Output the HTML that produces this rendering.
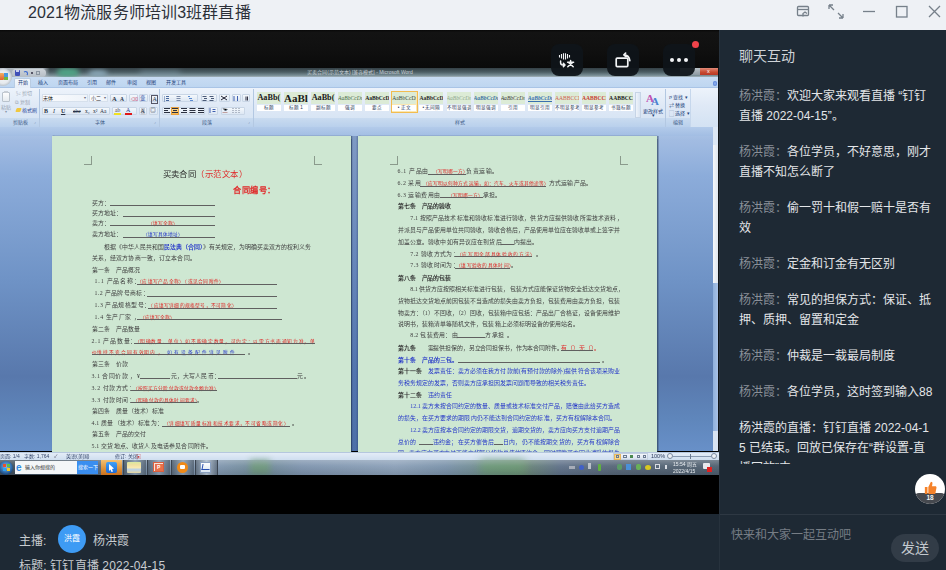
<!DOCTYPE html>
<html lang="zh-CN"><head><meta charset="utf-8">
<style>
*{margin:0;padding:0;box-sizing:border-box}
html,body{width:946px;height:570px;overflow:hidden;background:#1e2934;font-family:"Liberation Sans",sans-serif}
.a{position:absolute}
.glab{font-size:5px;line-height:9px;color:#3e5a86;text-align:center;white-space:nowrap}
.rt{font-size:5px;line-height:8px;color:#1d3f7a;white-space:nowrap}
.bx{height:10px;background:linear-gradient(#f4f8fc,#dde7f3);border:1px solid #c9d6e6;border-radius:1px}
.page{background:#cee7d2;box-shadow:-0.5px 0 1px rgba(30,50,80,.8),0.5px 0 1px rgba(30,50,80,.5)}
.pl{font-size:5.9px;line-height:8px;color:#404040;white-space:nowrap;font-family:"Liberation Serif",serif}
.h{font-size:4.5px;letter-spacing:0.45px}
.btn{width:32px;height:32px;border-radius:8px;background:#141b22}
.msgs{left:20px;top:56px;width:194px;height:378px;overflow:hidden;font-size:12px;line-height:20px;color:#e4e6e9;font-weight:500}
.m{margin-bottom:16px;word-break:break-all;text-spacing-trim:space-all}
.n{color:#8a9099}

</style></head><body>
<div class="a" style="left:0;top:0;width:946px;height:30px;background:#eef1f5"></div>
<div class="a" style="left:28px;top:2.3px;font-size:16px;line-height:22px;color:#2b3038;white-space:nowrap;letter-spacing:0.14px">2021物流服务师培训3班群直播</div>
<svg class="a" style="left:790px;top:0" width="156" height="30" viewBox="0 0 156 30" fill="none" stroke="#76808a" stroke-width="1.3">
  <rect x="7.5" y="6.5" width="11" height="9" rx="1"/><path d="M7.5 9.5h11"/><path d="M13 16.5v-3l2-1.5 2 1.5" />
  <path d="M39 5l5 5M39 5v4M39 5h4M53 18l-5-5M53 18v-4M53 18h-4"/>
  <path d="M73 11.5h12"/>
  <rect x="106.5" y="6.5" width="10.5" height="10.5"/>
  <path d="M139 6l11 11M150 6l-11 11"/>
</svg>
<div class="a" style="left:0;top:30px;width:719px;height:484px;background:#000"></div>
<div class="a" style="left:0;top:30px;width:719px;height:38px;background:linear-gradient(#080808 0,#131313 6%,#101010 50%,#0a0a0a 100%)"></div>

<div class="a" style="left:0;top:68px;width:719px;height:407px;overflow:hidden;filter:blur(0.3px)">
  <!-- word title bar (body y 68-77) -->
  <div class="a" style="left:0;top:0;width:719px;height:9px;background:linear-gradient(#344046,#4c5e64 45%,#7d929a 85%,#a9b6bd)"></div>
  <div class="a" style="left:57px;top:0;width:22px;height:9px;border-radius:40%;background:#4fa486;filter:blur(2.5px)"></div>
  <div class="a" style="left:88px;top:2px;width:20px;height:7px;border-radius:50%;background:#8aa8b8;filter:blur(2.5px)"></div>
  <div class="a" style="left:140px;top:3px;width:40px;height:6px;background:#7f9aa8;filter:blur(3px);opacity:.6"></div>
  <div class="a" style="left:0;top:0;width:50px;height:9px;background:linear-gradient(90deg,#aab3bb 0,#b0b8c0 85%,rgba(170,180,188,0))"></div>
  <div class="a" style="left:12px;top:1px;width:34px;height:8px;border-radius:4px;background:linear-gradient(#cdd3d9,#b6bec6)"></div>
  <div class="a" style="left:15px;top:2px;width:5px;height:6px;background:#4050b8;border-radius:1px"></div>
  <div class="a" style="left:16px;top:2px;width:3px;height:2px;background:#c8d0f0"></div>
  <div class="a" style="left:23px;top:2.5px;width:5px;height:5px;border:1.4px solid #3a6ad0;border-radius:50%;border-bottom-color:transparent;border-left-color:transparent"></div>
  <div class="a" style="left:31px;top:4px;width:1.5px;height:1.5px;background:#556"></div>
  <div class="a" style="left:36px;top:3px;width:4px;height:4px;border:1px solid #8a94a0"></div>
  <div class="a" style="left:245px;top:0;width:230px;height:9px;font-size:5px;line-height:9px;color:#c8d0d6;text-align:center;white-space:nowrap">买卖合同(示范文本) [兼容模式] - Microsoft Word</div>
  <div class="a" style="left:680px;top:0;width:20px;height:7px;background:linear-gradient(#b8c0c6,#8e9aa2)"></div>
  <div class="a" style="left:700px;top:0;width:18px;height:7px;background:linear-gradient(#e08a78,#c84a30 60%,#b83a28)"></div>
  <div class="a" style="left:707px;top:0;font-size:5.5px;line-height:7px;color:#fff">x</div>
  <!-- tabs (body 77-88) -->
  <div class="a" style="left:0;top:9px;width:719px;height:11px;background:linear-gradient(#c8dcf3,#bdd5f0)"></div>
  <div class="a" style="left:0;top:19px;width:719px;height:1px;background:#a9c4e6"></div>
  <div class="a" style="left:14px;top:10px;width:17px;height:10px;background:linear-gradient(#f6f9fd,#e6eef8);border:1px solid #b9cce2;border-bottom:none;border-radius:2px 2px 0 0"></div>
  <div class="a" style="left:0;top:9px;width:719px;height:11px;font-size:5px;line-height:11px;color:#1d3f7a;white-space:nowrap">
    <span class="a" style="left:18px">开始</span><span class="a" style="left:38px">插入</span><span class="a" style="left:58px">页面布局</span><span class="a" style="left:87px">引用</span><span class="a" style="left:106px">邮件</span><span class="a" style="left:127px">审阅</span><span class="a" style="left:146px">视图</span><span class="a" style="left:166px">开发工具</span>
  </div>
  <div class="a" style="left:712.5px;top:13px;width:4.5px;height:4.5px;border-radius:50%;background:radial-gradient(#9ab8f0,#3a6ad0)"></div>
  <!-- office orb -->
  <div class="a" style="left:-6px;top:0px;width:18px;height:18px;border-radius:50%;background:radial-gradient(circle at 50% 50%,#f4f6f8 0,#e6eaee 50%,#b8c0c8 72%,#8a96a2 85%,#cfd6dc 100%)"></div>
  <div class="a" style="left:-1px;top:5px;width:5px;height:7px;background:linear-gradient(#f4b060,#e06030);border-radius:1px"></div>
  <div class="a" style="left:4px;top:5px;width:4px;height:3.5px;background:#4a9ae0"></div>
  <div class="a" style="left:4px;top:8.5px;width:4px;height:3.5px;background:#70b840"></div>
  <!-- ribbon body (body 88-127) -->
  <div class="a" style="left:0;top:20px;width:719px;height:39px;background:linear-gradient(#edf3fb,#dfe9f6 45%,#d3e2f3)"></div>
  <div class="a" style="left:0;top:50px;width:690px;height:9px;background:linear-gradient(#c9dbf0,#b9d0ec)"></div>
  <div class="a" style="left:0;top:59px;width:719px;height:9px;background:linear-gradient(#b3cae8,#a0bce3)"></div>
  <div class="a" style="left:39px;top:21px;width:1px;height:38px;background:#b3c8e2"></div>
  <div class="a" style="left:159px;top:21px;width:1px;height:38px;background:#b3c8e2"></div>
  <div class="a" style="left:253px;top:21px;width:1px;height:38px;background:#b3c8e2"></div>
  <div class="a" style="left:665px;top:21px;width:1px;height:38px;background:#b3c8e2"></div>
  <div class="a" style="left:690px;top:21px;width:1px;height:38px;background:#c6d7ec"></div>
  <div class="a glab" style="left:0;top:50px;width:40px">剪贴板</div>
  <div class="a glab" style="left:40px;top:50px;width:119px">字体</div>
  <div class="a glab" style="left:160px;top:50px;width:93px">段落</div>
  <div class="a glab" style="left:254px;top:50px;width:411px">样式</div>
  <div class="a glab" style="left:666px;top:50px;width:24px">编辑</div>
  <!-- clipboard -->
  <div class="a" style="left:2px;top:23.5px;width:8px;height:10px;background:linear-gradient(#fdfdfe,#e6ebf0);border:0.8px solid #b9c2cc;border-radius:1px"></div>
  <div class="a" style="left:4px;top:22.5px;width:4px;height:2px;background:#c8ced6"></div>
  <div class="a rt" style="left:1px;top:35.5px;line-height:7px;color:#98a4b2">粘贴</div>
  <div class="a rt" style="left:4.5px;top:41px;line-height:6px;font-size:4px;color:#8896a8">▾</div>
  <div class="a rt" style="left:16px;top:22px;line-height:7px;color:#98a4b2">✂ 剪切</div>
  <div class="a rt" style="left:15px;top:30.5px;line-height:7px;color:#98a4b2">⧉ 复制</div>
  <div class="a" style="left:16px;top:40px;width:5px;height:4px;background:#f0c840;border-radius:1px;transform:skewX(-20deg)"></div>
  <div class="a rt" style="left:22px;top:38.5px;line-height:7px;color:#2a4a9a">格式刷</div>
  <div class="a rt" style="left:34px;top:51px;line-height:6px;font-size:4px;color:#7088a8">⌟</div>
  <!-- font group -->
  <div class="a" style="left:42px;top:25.700000000000003px;width:46px;height:8.4px;background:linear-gradient(90deg,#fbfcfe,#eef3f9);border:0.6px solid #d6e0ec"></div>
  <div class="a rt" style="left:43px;top:25.700000000000003px;line-height:8.4px;color:#222">宋体</div>
  <div class="a rt" style="left:84px;top:25.700000000000003px;line-height:8.4px;font-size:4px;color:#667">▾</div>
  <div class="a" style="left:89px;top:25.700000000000003px;width:19px;height:8.4px;background:linear-gradient(90deg,#fbfcfe,#eef3f9);border:0.6px solid #d6e0ec"></div>
  <div class="a rt" style="left:90.5px;top:25.700000000000003px;line-height:8.4px;color:#333">小二</div>
  <div class="a rt" style="left:104px;top:25.700000000000003px;line-height:8.4px;font-size:4px;color:#667">▾</div>
  <div class="a bx" style="left:110px;top:25.700000000000003px;width:17px;height:8.4px"></div>
  <div class="a bx" style="left:129px;top:25.700000000000003px;width:8.5px;height:8.4px"></div>
  <div class="a bx" style="left:138.5px;top:25.700000000000003px;width:9px;height:8.4px"></div>
  <div class="a bx" style="left:149px;top:25.700000000000003px;width:8.5px;height:8.4px"></div>
  <div class="a bx" style="left:42px;top:38.599999999999994px;width:67.5px;height:8.4px"></div>
  <div class="a bx" style="left:112px;top:38.599999999999994px;width:24.7px;height:8.4px"></div>
  <div class="a bx" style="left:139px;top:38.599999999999994px;width:8px;height:8.4px"></div>
  <div class="a bx" style="left:149px;top:38.599999999999994px;width:8.5px;height:8.4px"></div>
  <div class="a" style="left:0;top:0;width:260px;height:60px;font-family:'Liberation Serif',serif;color:#2a3448;white-space:nowrap">
    <span class="a" style="left:112px;top:26.5px;font-size:6.5px;line-height:7px;font-weight:bold">A</span><span class="a" style="left:120px;top:27.5px;font-size:5.5px;line-height:7px;font-weight:bold">A</span>
    <span class="a" style="left:151px;top:26.5px;font-size:6px;line-height:7px;border:0.6px solid #556;padding:0 .5px">A</span>
    <span class="a" style="left:140px;top:26.5px;font-size:5.5px;line-height:7px;color:#1d3f9a;font-family:'Liberation Sans',sans-serif">变</span>
    <span class="a" style="left:44px;top:39.5px;font-size:6px;line-height:7px;font-weight:bold">B</span>
    <span class="a" style="left:53px;top:39.5px;font-size:6px;line-height:7px;font-style:italic">I</span>
    <span class="a" style="left:61px;top:39.5px;font-size:6px;line-height:7px;font-weight:bold;text-decoration:underline">U</span>
    <span class="a" style="left:73px;top:39.5px;font-size:5.5px;line-height:7px;text-decoration:line-through">abe</span>
    <span class="a" style="left:85px;top:39.5px;font-size:5.5px;line-height:7px">x₂</span>
    <span class="a" style="left:93px;top:39.5px;font-size:5.5px;line-height:7px">x²</span>
    <span class="a" style="left:100px;top:39.5px;font-size:5.5px;line-height:7px">Aa</span>
    <span class="a" style="left:115px;top:39px;font-size:5.5px;line-height:7px;color:#445">ab</span>
    <span class="a" style="left:126px;top:39px;font-size:6px;line-height:7px;color:#2a3a8a">A</span>
    <span class="a" style="left:140.5px;top:39.5px;font-size:6px;line-height:7px;background:#c8ccd4">A</span>
    <span class="a" style="left:150px;top:39px;font-size:6px;line-height:7px">◎</span>
    <span class="a" style="left:131px;top:28px;font-size:5px;line-height:7px;color:#d06080">⌫</span>
  </div>
  <div class="a" style="left:114px;top:45px;width:7px;height:1.6px;background:#f0e020"></div>
  <div class="a" style="left:125px;top:45px;width:7px;height:1.6px;background:#e01818"></div>
  <!-- paragraph group -->
  <div class="a bx" style="left:162.2px;top:26.299999999999997px;width:36px;height:8px"></div>
  <div class="a bx" style="left:200.5px;top:26.299999999999997px;width:16.2px;height:8px"></div>
  <div class="a bx" style="left:219px;top:26.299999999999997px;width:11px;height:8px"></div>
  <div class="a bx" style="left:231.6px;top:26.299999999999997px;width:9px;height:8px"></div>
  <div class="a bx" style="left:242.2px;top:26.299999999999997px;width:8.3px;height:8px"></div>
  <div class="a bx" style="left:162.2px;top:38.5px;width:43.3px;height:8px"></div>
  <div class="a" style="left:170.5px;top:38.5px;width:8.4px;height:8px;background:linear-gradient(#fde0a0,#f8b850);border:0.6px solid #e8a040"></div>
  <div class="a bx" style="left:207.8px;top:38.5px;width:10.5px;height:8px"></div>
  <div class="a bx" style="left:220.5px;top:38.5px;width:24.5px;height:8px"></div>
  <svg class="a" style="left:0;top:0" width="260" height="60" viewBox="0 68 260 60">
    <g stroke="#3a4458" stroke-width="1">
      <path d="M164.5 96.5v1M166 96.5h3M164.5 98.5v1M166 98.5h3M164.5 100.5v1M166 100.5h3" stroke="#4a6aa0"/>
      <path d="M176.5 96.5h4M176.5 98.5h4M176.5 100.5h4" stroke="#7a8aa8"/>
      <path d="M188 96.5h2M189 98.5h3M190 100.5h3" stroke="#5a8ad0"/>
      <path d="M202.5 96.5h4M204 98.5h3M202.5 100.5h4M209.5 96.5h4M211 98.5h3M209.5 100.5h4" stroke="#4a5a78"/>
      <path d="M221 96l6 4M227 96l-6 4" stroke="#223"/>
      <path d="M234 96v5M237.5 96v5" stroke="#4060b0"/>
      <path d="M246 96.5v4M247.5 96.5v4" stroke="#334"/>
      <path d="M164 108.5h6M164 110.5h4M164 112.5h6" stroke="#2a3040"/>
      <path d="M172 108.5h6M173 110.5h4M172 112.5h6" stroke="#2a3040"/>
      <path d="M181 108.5h6M183 110.5h4M181 112.5h6" stroke="#2a3040"/>
      <path d="M189.5 108.5h6M189.5 110.5h6M189.5 112.5h6" stroke="#2a3040"/>
      <path d="M198 108.5h6M198 110.5h6M198 112.5h6" stroke="#2a3040"/>
      <path d="M210 108v5M212.5 109.5h3M212.5 111.5h3" stroke="#4060b0"/>
      <path d="M222.5 112.5h5" stroke="#c0a0a0"/><path d="M223 108.5l2.5 2.5 2-2" stroke="#6a7a90"/>
      <path d="M232.5 108.5h1M235.5 108.5h1M238.5 108.5h1M232.5 110.5h1M235.5 110.5h1M238.5 110.5h1M232.5 112.5h1M235.5 112.5h1M238.5 112.5h1" stroke="#7a8598"/>
    </g>
  </svg>
  <div class="a rt" style="left:248px;top:51px;line-height:6px;font-size:4px;color:#7088a8">⌟</div>
  <div class="a rt" style="left:154px;top:51px;line-height:6px;font-size:4px;color:#7088a8">⌟</div>
  <!-- gallery scroll -->
  <div class="a" style="left:635px;top:24px;width:6px;height:26px;background:linear-gradient(90deg,#eef3fa,#d9e4f2);border:1px solid #c6d4e6"></div>
  <div class="a" style="left:646px;top:24px;font-family:'Liberation Serif',serif;font-size:11px;line-height:12px;color:#c050b0;font-weight:bold">A</div>
  <div class="a" style="left:651px;top:27px;font-family:'Liberation Serif',serif;font-size:11px;line-height:12px;color:#4a80d0;font-weight:bold">A</div>
  <div class="a rt" style="left:643px;top:40px;line-height:6px;color:#1d3f7a">更改样式</div>
  <div class="a rt" style="left:652px;top:45px;line-height:4px;color:#1d3f7a">▾</div>
  <div class="a rt" style="left:669px;top:25px;line-height:8px;color:#1d3f7a;white-space:nowrap">ሾ 查找 ▾<br>⇄ 替换<br>⬚ 选择 ▾</div>

<div class="a" style="left:256.8px;top:24.3px;width:24px;height:12.2px;background:#dcebd6;overflow:hidden;font-family:'Liberation Serif',serif;font-size:8.2px;line-height:12.2px;color:#1a1a1a;font-weight:bold;white-space:nowrap;text-align:center">AaBb(</div>
<div class="a" style="left:256.8px;top:36.5px;width:24px;height:6.3px;background:#fff;font-size:4.6px;line-height:6.3px;text-align:center;color:#2a3a5a;white-space:nowrap;overflow:hidden">标题</div>
<div class="a" style="left:283.9px;top:24.3px;width:24px;height:12.2px;background:#dcebd6;overflow:hidden;font-family:'Liberation Serif',serif;font-size:11px;line-height:12.2px;color:#1a1a1a;font-weight:bold;white-space:nowrap;text-align:center">AaBl</div>
<div class="a" style="left:283.9px;top:36.5px;width:24px;height:6.3px;background:#fff;font-size:4.6px;line-height:6.3px;text-align:center;color:#2a3a5a;white-space:nowrap;overflow:hidden">标题 1</div>
<div class="a" style="left:311.0px;top:24.3px;width:24px;height:12.2px;background:#dcebd6;overflow:hidden;font-family:'Liberation Serif',serif;font-size:8.2px;line-height:12.2px;color:#1a1a1a;font-weight:bold;white-space:nowrap;text-align:center">AaBb(</div>
<div class="a" style="left:311.0px;top:36.5px;width:24px;height:6.3px;background:#fff;font-size:4.6px;line-height:6.3px;text-align:center;color:#2a3a5a;white-space:nowrap;overflow:hidden">副标题</div>
<div class="a" style="left:338.1px;top:24.3px;width:24px;height:12.2px;background:#dcebd6;overflow:hidden;font-family:'Liberation Serif',serif;font-size:5.6px;line-height:12.2px;color:#4a6a4a;font-weight:normal;font-style:italic;white-space:nowrap;text-align:center">AaBbCcDı</div>
<div class="a" style="left:338.1px;top:36.5px;width:24px;height:6.3px;background:#fff;font-size:4.6px;line-height:6.3px;text-align:center;color:#2a3a5a;white-space:nowrap;overflow:hidden">强调</div>
<div class="a" style="left:365.2px;top:24.3px;width:24px;height:12.2px;background:#dcebd6;overflow:hidden;font-family:'Liberation Serif',serif;font-size:5.6px;line-height:12.2px;color:#1a1a1a;font-weight:bold;white-space:nowrap;text-align:center">AaBbCcD</div>
<div class="a" style="left:365.2px;top:36.5px;width:24px;height:6.3px;background:#fff;font-size:4.6px;line-height:6.3px;text-align:center;color:#2a3a5a;white-space:nowrap;overflow:hidden">要点</div>
<div class="a" style="left:390.8px;top:23px;width:27px;height:22px;border:1px solid #f2bc50;background:#fbe7b0"></div>
<div class="a" style="left:392.3px;top:24.3px;width:24px;height:12.2px;background:#dcebd6;overflow:hidden;font-family:'Liberation Serif',serif;font-size:5.6px;line-height:12.2px;color:#3a4a3a;font-weight:normal;white-space:nowrap;text-align:center">AaBbCcDı</div>
<div class="a" style="left:392.3px;top:36.5px;width:24px;height:6.3px;background:#fff;font-size:4.6px;line-height:6.3px;text-align:center;color:#2a3a5a;white-space:nowrap;overflow:hidden">• 正文</div>
<div class="a" style="left:419.4px;top:24.3px;width:24px;height:12.2px;background:#dcebd6;overflow:hidden;font-family:'Liberation Serif',serif;font-size:5.6px;line-height:12.2px;color:#2a2a2a;font-weight:bold;white-space:nowrap;text-align:center">AaBbCcDı</div>
<div class="a" style="left:419.4px;top:36.5px;width:24px;height:6.3px;background:#fff;font-size:4.6px;line-height:6.3px;text-align:center;color:#2a3a5a;white-space:nowrap;overflow:hidden">• 无间隔</div>
<div class="a" style="left:446.5px;top:24.3px;width:24px;height:12.2px;background:#dcebd6;overflow:hidden;font-family:'Liberation Serif',serif;font-size:5.6px;line-height:12.2px;color:#90a890;font-weight:normal;font-style:italic;white-space:nowrap;text-align:center">AaBbCcDı</div>
<div class="a" style="left:446.5px;top:36.5px;width:24px;height:6.3px;background:#fff;font-size:4.6px;line-height:6.3px;text-align:center;color:#2a3a5a;white-space:nowrap;overflow:hidden">不明显强调</div>
<div class="a" style="left:473.6px;top:24.3px;width:24px;height:12.2px;background:#dcebd6;overflow:hidden;font-family:'Liberation Serif',serif;font-size:5.6px;line-height:12.2px;color:#3a70a0;font-weight:bold;font-style:italic;white-space:nowrap;text-align:center">AaBbCcDı</div>
<div class="a" style="left:473.6px;top:36.5px;width:24px;height:6.3px;background:#fff;font-size:4.6px;line-height:6.3px;text-align:center;color:#2a3a5a;white-space:nowrap;overflow:hidden">明显强调</div>
<div class="a" style="left:500.7px;top:24.3px;width:24px;height:12.2px;background:#dcebd6;overflow:hidden;font-family:'Liberation Serif',serif;font-size:5.6px;line-height:12.2px;color:#3a3a3a;font-weight:normal;font-style:italic;white-space:nowrap;text-align:center">AaBbCcDı</div>
<div class="a" style="left:500.7px;top:36.5px;width:24px;height:6.3px;background:#fff;font-size:4.6px;line-height:6.3px;text-align:center;color:#2a3a5a;white-space:nowrap;overflow:hidden">引用</div>
<div class="a" style="left:527.8px;top:24.3px;width:24px;height:12.2px;background:#dcebd6;overflow:hidden;font-family:'Liberation Serif',serif;font-size:5.6px;line-height:12.2px;color:#3a70b0;font-weight:bold;font-style:italic;text-decoration:underline;white-space:nowrap;text-align:center">AaBbCcDı</div>
<div class="a" style="left:527.8px;top:36.5px;width:24px;height:6.3px;background:#fff;font-size:4.6px;line-height:6.3px;text-align:center;color:#2a3a5a;white-space:nowrap;overflow:hidden">明显引用</div>
<div class="a" style="left:554.9px;top:24.3px;width:24px;height:12.2px;background:#dcebd6;overflow:hidden;font-family:'Liberation Serif',serif;font-size:5.6px;line-height:12.2px;color:#d06050;font-weight:normal;white-space:nowrap;text-align:center">AABBCCD</div>
<div class="a" style="left:554.9px;top:36.5px;width:24px;height:6.3px;background:#fff;font-size:4.6px;line-height:6.3px;text-align:center;color:#2a3a5a;white-space:nowrap;overflow:hidden">不明显参考</div>
<div class="a" style="left:582.0px;top:24.3px;width:24px;height:12.2px;background:#dcebd6;overflow:hidden;font-family:'Liberation Serif',serif;font-size:5.6px;line-height:12.2px;color:#c84030;font-weight:bold;white-space:nowrap;text-align:center">AABBCCI</div>
<div class="a" style="left:582.0px;top:36.5px;width:24px;height:6.3px;background:#fff;font-size:4.6px;line-height:6.3px;text-align:center;color:#2a3a5a;white-space:nowrap;overflow:hidden">明显参考</div>
<div class="a" style="left:609.1px;top:24.3px;width:24px;height:12.2px;background:#dcebd6;overflow:hidden;font-family:'Liberation Serif',serif;font-size:5.6px;line-height:12.2px;color:#1a1a1a;font-weight:bold;white-space:nowrap;text-align:center">AABBCCI</div>
<div class="a" style="left:609.1px;top:36.5px;width:24px;height:6.3px;background:#fff;font-size:4.6px;line-height:6.3px;text-align:center;color:#2a3a5a;white-space:nowrap;overflow:hidden">书籍标题</div>

  <!-- doc background (body 127-451) -->
  <div class="a" style="left:0;top:59px;width:713px;height:324px;background:linear-gradient(#b0c8e8 0,#a2bce2 4%,#8cacda 15%,#6f93c6 47%,#5878ac 77%,#5f86bb 90%,#6890c8 100%)"></div>
  <div class="a" style="left:0;top:59px;width:713px;height:9px;background:linear-gradient(#b3cbea,#a2bde3)"></div>
  <div class="a" style="left:713px;top:59px;width:5px;height:324px;background:linear-gradient(90deg,#8fb0dc,#a9c2e6)"></div>
  <div class="a" style="left:713px;top:59px;width:5px;height:18px;background:#dde8f5"></div>
  <div class="a" style="left:713px;top:77px;width:5px;height:138px;background:linear-gradient(90deg,#f6f8fb,#dfe6ee)"></div>
  <div class="a" style="left:713px;top:363px;width:5px;height:20px;background:#d8e4f3"></div>
  <div class="a" style="left:718px;top:0;width:1px;height:407px;background:#101418"></div>
  <div class="a" style="left:351px;top:68px;width:7px;height:315px;background:linear-gradient(90deg,rgba(30,50,90,.35),rgba(30,50,90,0) 30%,rgba(30,50,90,0) 70%,rgba(30,50,90,.3)),linear-gradient(#7f9ac4,#6686ba 40%,#5275ae 75%,#4d70a8)"></div>
  <div class="a page" style="left:52px;top:68px;width:299px;height:320px"></div>
  <div class="a page" style="left:358px;top:68px;width:299px;height:320px"></div>
  <div class="a" style="left:657px;top:68px;width:2px;height:315px;background:rgba(60,80,110,.35)"></div>
  <div class="a" style="left:91px;top:88px;width:0.8px;height:8px;background:#8a9a8c"></div>
  <div class="a" style="left:84px;top:96px;width:8px;height:0.8px;background:#8a9a8c"></div>
  <div class="a" style="left:314px;top:88px;width:0.8px;height:8px;background:#8a9a8c"></div>
  <div class="a" style="left:314px;top:96px;width:8px;height:0.8px;background:#8a9a8c"></div>
  <div class="a" style="left:397px;top:88px;width:0.8px;height:8px;background:#8a9a8c"></div>
  <div class="a" style="left:390px;top:96px;width:8px;height:0.8px;background:#8a9a8c"></div>
  <div class="a" style="left:620px;top:88px;width:0.8px;height:8px;background:#8a9a8c"></div>
  <div class="a" style="left:620px;top:96px;width:8px;height:0.8px;background:#8a9a8c"></div>
  <div class="a" style="left:0;top:0;width:719px;height:383px;filter:blur(0.2px)">
  <div class="a" style="left:162.5px;top:101px;font-size:8.4px;line-height:11px;color:#2a2a2a;white-space:nowrap;letter-spacing:0.45px">买卖合同<span style="color:#e02828">（示范文本）</span></div>
  <div class="a" style="left:233px;top:116.5px;font-size:8.2px;line-height:11px;color:#e02828;font-weight:bold;white-space:nowrap;letter-spacing:0.5px">合同编号：</div>
<div class="a pl" style="left:91.6px;top:131.0px"><span style="color:#404040">买方：</span></div>
<div class="a" style="left:110.4px;top:137.2px;width:104.6px;height:0.5px;background:#606060"></div>
<div class="a pl" style="left:91.6px;top:141.3px"><span style="color:#404040">买方地址：</span></div>
<div class="a" style="left:122.5px;top:147.5px;width:92.5px;height:0.5px;background:#606060"></div>
<div class="a pl" style="left:91.6px;top:150.9px"><span style="color:#404040">卖方：</span></div>
<div class="a pl" style="left:148.4px;top:150.9px"><span style="color:#e02020;font-size:4.7px">（填写全称）</span></div>
<div class="a" style="left:110.4px;top:157.1px;width:104.6px;height:0.5px;background:#606060"></div>
<div class="a pl" style="left:91.6px;top:162.3px"><span style="color:#404040">卖方地址：</span></div>
<div class="a pl" style="left:142.8px;top:162.3px"><span style="color:#2030c8;font-size:4.7px">（填写具体地址）</span></div>
<div class="a" style="left:122.5px;top:168.5px;width:92.5px;height:0.5px;background:#606060"></div>
<div class="a pl" style="left:104.3px;top:174.5px"><span style="color:#404040">根据《中华人民共和国</span><span style="color:#2436c8;font-weight:bold">民法典（合同）</span><span style="color:#404040">》有关规定，为明确买卖双方的权利义务</span></div>
<div class="a pl" style="left:91.6px;top:185.6px"><span style="color:#404040;letter-spacing:0.13px">关系，经双方协商一致，订立本合同。</span></div>
<div class="a pl" style="left:91.6px;top:197.8px"><span style="color:#404040">第一条　产品概况</span></div>
<div class="a pl" style="left:94.6px;top:209.3px"><span style="color:#404040;letter-spacing:0.81px">1.1 产品名称：</span></div>
<div class="a pl" style="left:137.0px;top:209.3px"><span style="color:#e02020;font-size:4.7px;letter-spacing:0.26px">（应填写产品全称）（或见合同附件）</span></div>
<div class="a" style="left:137.0px;top:215.5px;width:140.3px;height:0.5px;background:#606060"></div>
<div class="a pl" style="left:94.6px;top:221.3px"><span style="color:#404040;letter-spacing:0.34px">1.2 产品牌号商标：</span></div>
<div class="a" style="left:147.2px;top:227.5px;width:129.8px;height:0.5px;background:#606060"></div>
<div class="a pl" style="left:94.6px;top:233.3px"><span style="color:#404040;letter-spacing:0.48px">1.3 产品规格型号：</span></div>
<div class="a pl" style="left:148.4px;top:233.3px"><span style="color:#e02020;font-size:4.7px;letter-spacing:0.21px">（应填写详细的规格型号，不可简化）</span></div>
<div class="a" style="left:148.0px;top:239.5px;width:129.0px;height:0.5px;background:#606060"></div>
<div class="a pl" style="left:94.6px;top:245.0px"><span style="color:#404040;letter-spacing:0.56px">1.4 生产厂家 ，</span></div>
<div class="a pl" style="left:139.5px;top:245.0px"><span style="color:#e02020;font-size:4.7px;letter-spacing:0.03px">（应填写全称）</span></div>
<div class="a" style="left:137.0px;top:251.2px;width:144.6px;height:0.5px;background:#606060"></div>
<div class="a pl" style="left:91.6px;top:256.9px"><span style="color:#404040">第二条　产品数量</span></div>
<div class="a pl" style="left:91.6px;top:268.8px"><span style="color:#404040;letter-spacing:0.73px">2.1 产品数量：</span></div>
<div class="a pl" style="left:134.5px;top:268.8px"><span style="color:#e02020;font-size:4.7px;letter-spacing:0.66px">（明确数量、单位）如不能确定数量，可约定：以需方书面通知为准，单</span></div>
<div class="a" style="left:134.0px;top:275.0px;width:180.6px;height:0.5px;background:#606060"></div>
<div class="a pl" style="left:91.6px;top:280.2px"><span style="color:#e02020;font-size:4.7px;letter-spacing:0.87px">价维持不变合同有效期内 ，</span></div>
<div class="a pl" style="left:167.4px;top:280.2px"><span style="color:#2030c8;font-size:4.7px;letter-spacing:2.00px">如有设备配件详见附件</span></div>
<div class="a pl" style="left:248.0px;top:280.2px"><span style="color:#404040">。</span></div>
<div class="a" style="left:92.0px;top:286.4px;width:153.0px;height:0.5px;background:#606060"></div>
<div class="a pl" style="left:91.6px;top:291.6px"><span style="color:#404040">第三条　价款</span></div>
<div class="a pl" style="left:91.6px;top:303.8px"><span style="color:#404040;letter-spacing:0.51px">3.1 合同价款 ，¥</span></div>
<div class="a pl" style="left:170.7px;top:303.8px"><span style="color:#404040;letter-spacing:0.16px">元，大写人民币：</span></div>
<div class="a pl" style="left:296.8px;top:303.8px"><span style="color:#404040">元 。</span></div>
<div class="a" style="left:139.5px;top:310.0px;width:30.5px;height:0.5px;background:#606060"></div>
<div class="a" style="left:218.0px;top:310.0px;width:78.8px;height:0.5px;background:#606060"></div>
<div class="a pl" style="left:91.6px;top:315.8px"><span style="color:#404040;letter-spacing:0.56px">3.2 付款方式：</span></div>
<div class="a pl" style="left:133.2px;top:315.8px"><span style="color:#e02020;font-size:4.7px;letter-spacing:0.05px">（按照买方分阶付款或付款金额为准）</span></div>
<div class="a" style="left:131.0px;top:322.0px;width:86.4px;height:0.5px;background:#606060"></div>
<div class="a pl" style="left:91.6px;top:327.7px"><span style="color:#404040;letter-spacing:0.56px">3.3 付款时间：</span></div>
<div class="a pl" style="left:133.0px;top:327.7px"><span style="color:#e02020;font-size:4.7px;letter-spacing:0.17px">（明确付款的具体时间要求）</span></div>
<div class="a pl" style="left:197.0px;top:327.7px"><span style="color:#404040">。</span></div>
<div class="a" style="left:131.0px;top:333.9px;width:66.0px;height:0.5px;background:#606060"></div>
<div class="a pl" style="left:91.6px;top:338.6px"><span style="color:#404040;letter-spacing:0.04px">第四条　质量（技术）标准</span></div>
<div class="a pl" style="left:91.6px;top:351.3px"><span style="color:#404040;letter-spacing:0.18px">4.1 质量（技术）标准为：</span></div>
<div class="a pl" style="left:163.6px;top:351.3px"><span style="color:#e02020;font-size:4.7px;letter-spacing:0.46px">（详细填写质量标准和技术要求，不可省略或简化）</span></div>
<div class="a pl" style="left:291.7px;top:351.3px"><span style="color:#404040">。</span></div>
<div class="a" style="left:162.4px;top:357.5px;width:128.1px;height:0.5px;background:#606060"></div>
<div class="a pl" style="left:91.6px;top:362.2px"><span style="color:#404040">第五条　产品的交付</span></div>
<div class="a pl" style="left:91.6px;top:374.1px"><span style="color:#404040;letter-spacing:0.18px">5.1 交货地点、收货人及电话参见合同附件。</span></div>
<div class="a pl" style="left:397.6px;top:99.4px"><span style="color:#404040;letter-spacing:0.67px">6.1 产品由</span></div>
<div class="a pl" style="left:433.0px;top:99.4px"><span style="color:#e02020;font-size:4.7px;letter-spacing:0.03px">（写明哪一方）</span></div>
<div class="a pl" style="left:466.0px;top:99.4px"><span style="color:#404040;letter-spacing:0.56px">负责运输。</span></div>
<div class="a" style="left:428.0px;top:105.6px;width:38.0px;height:0.5px;background:#606060"></div>
<div class="a pl" style="left:397.6px;top:111.3px"><span style="color:#404040;letter-spacing:0.49px">6.2 采用</span></div>
<div class="a pl" style="left:423.0px;top:111.3px"><span style="color:#e02020;font-size:4.7px;letter-spacing:0.06px">（应写明以何种方式运输，如：汽车、火车或其他途等）</span></div>
<div class="a pl" style="left:548.5px;top:111.3px"><span style="color:#404040;letter-spacing:0.29px">方式运输产品。</span></div>
<div class="a" style="left:420.4px;top:117.5px;width:125.6px;height:0.5px;background:#606060"></div>
<div class="a pl" style="left:397.6px;top:122.8px"><span style="color:#404040;letter-spacing:0.44px">6.3 运输费用由</span></div>
<div class="a pl" style="left:448.0px;top:122.8px"><span style="color:#e02020;font-size:4.7px;letter-spacing:0.06px">（写明哪一方）</span></div>
<div class="a pl" style="left:482.6px;top:122.8px"><span style="color:#404040">承担。</span></div>
<div class="a" style="left:439.5px;top:129.0px;width:43.1px;height:0.5px;background:#606060"></div>
<div class="a pl" style="left:397.6px;top:134.4px"><span style="color:#333;font-weight:bold;letter-spacing:-0.02px">第七条　产品的验收</span></div>
<div class="a pl" style="left:410.3px;top:146.3px"><span style="color:#404040;letter-spacing:0.15px">7.1 按照产品技术标准和验收标准进行验收，供货方应提供验收所需技术资料，</span></div>
<div class="a pl" style="left:397.6px;top:157.8px"><span style="color:#404040;letter-spacing:0.01px">并派员与产品使用单位共同验收，验收合格后，产品使用单位应在验收单或上签字并</span></div>
<div class="a pl" style="left:397.6px;top:169.7px"><span style="color:#404040;letter-spacing:0.12px">加盖公章。验收中如有异议应在到货后</span></div>
<div class="a pl" style="left:514.3px;top:169.7px"><span style="color:#404040">内提出。</span></div>
<div class="a" style="left:501.0px;top:175.9px;width:13.3px;height:0.5px;background:#606060"></div>
<div class="a pl" style="left:410.3px;top:181.9px"><span style="color:#404040;letter-spacing:0.42px">7.2 验收方式为：</span></div>
<div class="a pl" style="left:456.5px;top:181.9px"><span style="color:#e02020;font-size:4.7px;letter-spacing:0.68px">（应写明全部具体验收的方法）</span></div>
<div class="a pl" style="left:536.0px;top:181.9px"><span style="color:#404040">。</span></div>
<div class="a" style="left:454.7px;top:188.1px;width:77.3px;height:0.5px;background:#606060"></div>
<div class="a pl" style="left:410.3px;top:193.3px"><span style="color:#404040;letter-spacing:0.42px">7.3 验收时间为：</span></div>
<div class="a pl" style="left:456.0px;top:193.3px"><span style="color:#e02020;font-size:4.7px;letter-spacing:0.29px">（填写验收的具体时间）</span></div>
<div class="a pl" style="left:510.5px;top:193.3px"><span style="color:#404040">。</span></div>
<div class="a" style="left:454.7px;top:199.5px;width:55.8px;height:0.5px;background:#606060"></div>
<div class="a pl" style="left:397.6px;top:205.5px"><span style="color:#333;font-weight:bold;letter-spacing:-0.02px">第八条　产品的包装</span></div>
<div class="a pl" style="left:410.3px;top:217.4px"><span style="color:#404040;letter-spacing:0.02px">8.1 供货方应按照相关标准进行包装，包装方式应能保证货物安全抵达交货地点，</span></div>
<div class="a pl" style="left:397.6px;top:229.3px"><span style="color:#404040;letter-spacing:0.01px">货物抵达交货地点前因包装不当造成的损失由卖方负担，包装费用由卖方负担，包装</span></div>
<div class="a pl" style="left:397.6px;top:241.0px"><span style="color:#404040;letter-spacing:0.02px">物卖方：（1）不回收，（2）回收，包装箱中应包括：产品出厂合格证，设备使用维护</span></div>
<div class="a pl" style="left:397.6px;top:251.6px"><span style="color:#404040;letter-spacing:0.06px">说明书，装箱清单等随机文件，包装箱上必须标明设备的使用站名。</span></div>
<div class="a pl" style="left:410.3px;top:263.0px"><span style="color:#404040;letter-spacing:0.28px">8.2 包装费用：由</span></div>
<div class="a pl" style="left:485.1px;top:263.0px"><span style="color:#404040;letter-spacing:0.67px">方承担 。</span></div>
<div class="a" style="left:457.2px;top:269.2px;width:27.9px;height:0.5px;background:#606060"></div>
<div class="a pl" style="left:397.6px;top:275.8px"><span style="color:#333;font-weight:bold">第九条</span></div>
<div class="a pl" style="left:427.5px;top:275.8px"><span style="color:#404040;letter-spacing:-0.12px">需提供担保的，另立合同担保书，作为本合同附件。</span></div>
<div class="a pl" style="left:561.0px;top:275.8px"><span style="color:#e02828;letter-spacing:-0.04px">有（）无（）。</span></div>
<div class="a" style="left:561.0px;top:282.0px;width:32.0px;height:0.5px;background:#606060"></div>
<div class="a pl" style="left:397.6px;top:287.7px"><span style="color:#2436c8;font-weight:bold;letter-spacing:0.01px">第十条　产品的三包。</span></div>
<div class="a pl" style="left:602.0px;top:287.7px"><span style="color:#404040">。</span></div>
<div class="a" style="left:458.0px;top:293.9px;width:142.0px;height:0.5px;background:#606060"></div>
<div class="a pl" style="left:397.6px;top:299.1px"><span style="color:#333;font-weight:bold">第十一条</span></div>
<div class="a pl" style="left:427.5px;top:299.1px"><span style="color:#2436c8;letter-spacing:0.08px">发票责任：卖方必须在我方付款前(有预付款的除外)提供符合该项采购业</span></div>
<div class="a pl" style="left:397.6px;top:311.3px"><span style="color:#2436c8">务税务规定的发票，否则卖方应承担因发票问题而导致的相关税务责任。</span></div>
<div class="a pl" style="left:397.6px;top:322.7px"><span style="color:#333;font-weight:bold">第十二条</span></div>
<div class="a pl" style="left:427.5px;top:322.7px"><span style="color:#2436c8">违约责任</span></div>
<div class="a pl" style="left:410.3px;top:334.1px"><span style="color:#2436c8">12.1 卖方未按合同约定的数量、质量或技术标准交付产品，赔偿由此给买方造成</span></div>
<div class="a pl" style="left:397.6px;top:346.0px"><span style="color:#2436c8;letter-spacing:0.08px">的损失，在买方要求的期限内仍不能达到合同约定的标准，买方有权解除本合同。</span></div>
<div class="a pl" style="left:410.3px;top:357.7px"><span style="color:#2436c8">12.2 卖方应按本合同约定的期限交货，逾期交货的，卖方应向买方支付逾期产品</span></div>
<div class="a pl" style="left:397.6px;top:369.6px"><span style="color:#2436c8">总价的</span></div>
<div class="a pl" style="left:433.0px;top:369.6px"><span style="color:#2436c8;letter-spacing:0.16px">违约金；在买方催告后</span></div>
<div class="a pl" style="left:503.0px;top:369.6px"><span style="color:#2436c8;letter-spacing:0.17px">日内，仍不能按期交货的，买方有权解除合</span></div>
<div class="a" style="left:419.2px;top:375.8px;width:13.8px;height:0.5px;background:#606060"></div>
<div class="a" style="left:494.0px;top:375.8px;width:9.0px;height:0.5px;background:#606060"></div>
<div class="a pl" style="left:397.6px;top:381.0px"><span style="color:#2436c8;letter-spacing:-0.15px">同，卖方应向买方支付不能交货部分货款总值的违约金，同时赔偿买方因此遭受的损失</span></div>
  </div>

  <!-- status bar (body 451-459 => 383-391) -->
  <div class="a" style="left:0;top:384px;width:719px;height:8px;background:linear-gradient(#e6eef8,#cfdeef)"></div>
  <div class="a" style="left:0;top:384px;width:719px;height:1px;background:#b5c7de"></div>
  <div class="a rt" style="left:0;top:384px;line-height:8px;color:#34466a">页面: 1/4</div><div class="a rt" style="left:24px;top:384px;line-height:8px;color:#34466a">字数: 1,764</div><div class="a rt" style="left:54px;top:384px;line-height:8px;color:#556">✓</div><div class="a rt" style="left:66px;top:384px;line-height:8px;color:#34466a">英语(美国)</div><div class="a rt" style="left:115px;top:384px;line-height:8px;color:#34466a">修订: 关闭</div><div class="a rt" style="left:136px;top:384px;line-height:8px;color:#c44">▣</div>
  <div class="a" style="left:613px;top:385px;width:35px;height:7px;background:linear-gradient(#f3f6fa,#d8e2ee);border:1px solid #c3d0e0"></div>
  <div class="a" style="left:614px;top:385.5px;width:7px;height:6px;background:#f8d890;border:1px solid #e8b860"></div>
  <div class="a" style="left:616px;top:387px;width:3px;height:3px;border:0.8px solid #6a7a90"></div>
  <div class="a" style="left:623px;top:387px;width:4px;height:3px;border:0.8px solid #6a7a90"></div>
  <div class="a" style="left:630px;top:387px;width:3px;height:3px;background:#4a8a50"></div>
  <div class="a" style="left:637px;top:387px;width:3px;height:3px;border:0.8px solid #6a7a90"></div>
  <div class="a" style="left:643px;top:387px;width:3px;height:3px;border:0.8px solid #6a7a90"></div>
  <div class="a rt" style="left:651px;top:384px;line-height:8px;color:#2a3a5a;font-size:5.5px">100%</div>
  <div class="a" style="left:667px;top:385px;width:6px;height:6px;border-radius:50%;border:0.8px solid #7a8aa0;background:#eef2f7"></div>
  <div class="a" style="left:673px;top:388px;width:38px;height:0.8px;background:#8899b0"></div>
  <div class="a" style="left:689.5px;top:386px;width:1.5px;height:5px;background:#6a7a90"></div>
  <div class="a" style="left:711px;top:385px;width:6px;height:6px;border-radius:50%;border:0.8px solid #7a8aa0;background:#eef2f7"></div>
  <!-- taskbar (body 459-474 => 391-406) -->
  <div class="a" style="left:0;top:392px;width:719px;height:14.5px;background:linear-gradient(90deg,#3e4c5a 0,#4c5c6c 12%,#7a90a8 20%,#8197b0 30%,#6f8a98 36%,#7e94ae 42%,#8ba0b8 55%,#7a92aa 62%,#6a8a80 70%,#6a8678 73%,#5e7088 78%,#566678 85%,#4e5e6e 100%)"></div>
  <div class="a" style="left:250px;top:392px;width:20px;height:14.5px;background:#6e9a78;filter:blur(3px);opacity:.8"></div>
  <div class="a" style="left:480px;top:392px;width:45px;height:14.5px;background:#6a9a72;filter:blur(4px);opacity:.8"></div>
  <div class="a" style="left:0;top:392px;width:719px;height:14.5px;background:linear-gradient(rgba(255,255,255,.25),rgba(255,255,255,.05) 40%,rgba(0,0,0,.1))"></div>
  <div class="a" style="left:-1px;top:392.5px;width:14px;height:14px;border-radius:50%;background:radial-gradient(circle at 50% 40%,#8ab8e0 0,#3a78b8 45%,#143a68 80%,#0a2040 100%)"></div>
  <div class="a" style="left:3px;top:396px;width:3px;height:3px;background:#e85030"></div>
  <div class="a" style="left:6.5px;top:396px;width:3px;height:3px;background:#60c040"></div>
  <div class="a" style="left:3px;top:399.5px;width:3px;height:3px;background:#30a0f0"></div>
  <div class="a" style="left:6.5px;top:399.5px;width:3px;height:3px;background:#f8c820"></div>
  <div class="a" style="left:15px;top:393px;width:62px;height:13px;background:#f4f6f8"></div>
  <div class="a" style="left:16px;top:394px;font-size:10px;line-height:11px;color:#2f8ae0;font-weight:bold">e</div>
  <div class="a rt" style="left:25px;top:394px;line-height:11px;color:#333">输入你想搜的</div>
  <div class="a" style="left:77px;top:393px;width:21px;height:13px;background:#3a8ef0"></div>
  <div class="a rt" style="left:78px;top:394px;line-height:11px;color:#fff">搜索一下</div>
  <div class="a" style="left:101px;top:392px;width:21px;height:14.5px;background:linear-gradient(#f4c070,#d88830 70%,#c87020)"></div>
  <div class="a" style="left:106px;top:393.5px;width:11px;height:11px;border-radius:2px;background:linear-gradient(#40a0f8,#1a6ad8)"></div>
  <svg class="a" style="left:106px;top:393.5px" width="11" height="11" viewBox="0 0 11 11"><path d="M3 2l5 4.5-2 .5 1 2.5-1.5.5-1-2.5-1.5 1.5z" fill="#fff"/></svg>
  <div class="a" style="left:123px;top:392px;width:1px;height:14.5px;background:#3a4450"></div>
  <div class="a" style="left:124px;top:392px;width:22px;height:14.5px;background:linear-gradient(90deg,rgba(60,72,84,.6),rgba(150,168,186,.55) 50%,rgba(60,72,84,.6))"></div>
  <div class="a" style="left:127px;top:394px;width:14px;height:11px;background:linear-gradient(#d8e8a0 0,#f0e0a0 25%,#f8e8b0 50%,#b8d0e8 70%,#e8d8a0 100%);border-radius:1px"></div>
  <div class="a" style="left:147px;top:392px;width:1px;height:14.5px;background:#3a4450"></div>
  <div class="a" style="left:148px;top:392px;width:22px;height:14.5px;background:linear-gradient(90deg,rgba(60,72,84,.6),rgba(150,168,186,.5) 50%,rgba(60,72,84,.6))"></div>
  <div class="a" style="left:153px;top:394px;width:11px;height:10px;background:#f4e4dc;border:1px solid #d86040"></div>
  <div class="a" style="left:154.5px;top:395.5px;width:8px;height:7px;background:#e8704a"></div>
  <div class="a" style="left:157px;top:396px;font-size:5px;line-height:6px;color:#fff;font-weight:bold">P</div>
  <div class="a" style="left:171px;top:392px;width:1px;height:14.5px;background:#3a4450"></div>
  <div class="a" style="left:172px;top:392px;width:22px;height:14.5px;background:linear-gradient(90deg,rgba(60,72,84,.6),rgba(150,168,186,.5) 50%,rgba(60,72,84,.6))"></div>
  <div class="a" style="left:177px;top:393.5px;width:11px;height:11px;border-radius:50%;background:#f08a18"></div>
  <div class="a" style="left:180px;top:397px;width:5px;height:3.5px;border-radius:1px;background:#fff"></div>
  <div class="a" style="left:195px;top:392px;width:1px;height:14.5px;background:#3a4450"></div>
  <div class="a" style="left:196px;top:392px;width:21px;height:14.5px;background:linear-gradient(90deg,rgba(80,92,104,.6),rgba(200,212,224,.6) 50%,rgba(80,92,104,.6))"></div>
  <div class="a" style="left:200px;top:393.5px;width:11px;height:11px;background:linear-gradient(#ffffff,#d8e4f0);border:0.8px solid #8aa0c0"></div>
  <div class="a" style="left:201.5px;top:396px;width:8px;height:6px;border-left:1.5px solid #2a50b0;border-bottom:1.5px solid #2a50b0;transform:skewX(-10deg)"></div>
  <div class="a" style="left:217px;top:392px;width:1px;height:14.5px;background:#3a4450"></div>
  <div class="a" style="left:569px;top:398px;width:6px;height:3px;background:#b8bcc4;opacity:.8"></div>
  <div class="a" style="left:579px;top:396.5px;width:5px;height:5px;background:#4060c8;border-radius:50%"></div>
  <div class="a" style="left:588px;top:395px;width:3px;height:6px;background:#d0d4da;opacity:.8"></div>
  <div class="a" style="left:598px;top:396px;width:3px;height:7px;background:#60b040;border-radius:1px"></div>
  <div class="a" style="left:617px;top:396px;width:5px;height:6px;background:#5a9a68;border-radius:2px"></div>
  <div class="a" style="left:626px;top:395.5px;width:5px;height:6px;background:#4a90d8"></div>
  <div class="a" style="left:636px;top:395.5px;width:5px;height:6px;background:#68b058;border-radius:2px"></div>
  <div class="a" style="left:645px;top:396.5px;width:6px;height:5px;background:#d8c820;border-radius:50%"></div>
  <div class="a" style="left:655px;top:396px;width:5px;height:5px;border:0.8px solid #d8dce2"></div>
  <div class="a" style="left:665px;top:397px;width:2px;height:4px;background:#d8dce2"></div>
  <div class="a rt" style="left:673px;top:393px;line-height:7px;color:#e8ecf0;white-space:nowrap">15:54 周五<br>2022/4/15</div>
  <div class="a" style="left:703px;top:395px;width:7px;height:6px;background:#e8e8ec;border-radius:1px"></div>
  <div class="a" style="left:707px;top:399px;width:5px;height:5px;background:#e02020"></div>

</div>
<div class="a btn" style="left:551px;top:44px;background:rgba(15,20,26,.94)"></div>
<div class="a btn" style="left:607px;top:44px;background:rgba(15,20,26,.94)"></div>
<div class="a btn" style="left:663px;top:44px;background:rgba(15,20,26,.94)"></div>
<svg class="a" style="left:551px;top:44px" width="32" height="32" viewBox="0 0 32 32" fill="none" stroke="#f2f4f6" stroke-width="1.3" stroke-linecap="round" stroke-linejoin="round">
  <path d="M8.5 11v2.6M10.5 10v4.6M12.5 9.2v6.2M14.5 9.2v6.2M16.5 10v4.6M18.5 11v2.6" stroke-width="1.1" stroke-linecap="butt"/>
  <path d="M9.6 17v1.8c0 1.4.8 2.2 2.2 2.2h2M12.4 19.4l1.6 1.6-1.6 1.6" stroke-width="1.5"/>
  <path d="M19.6 16.4v1.2M16.6 18.2h6M17.8 18.6l4.4 4.2M21.4 18.6l-4.6 4.2" stroke-width="1.5"/>
</svg>
<svg class="a" style="left:607px;top:44px" width="32" height="32" viewBox="0 0 32 32" fill="none" stroke="#f2f4f6" stroke-width="1.7" stroke-linecap="round" stroke-linejoin="round">
  <rect x="9.2" y="14.2" width="11.6" height="8.4" rx="1"/>
  <path d="M22.8 16.6c-.4-3.2-2.6-5.6-5.8-5.8M18.6 9.2l-1.7 1.6 1.7 1.6"/>
</svg>
<div class="a" style="left:670px;top:58px;width:4px;height:4px;border-radius:50%;background:#f2f4f6"></div>
<div class="a" style="left:677px;top:58px;width:4px;height:4px;border-radius:50%;background:#f2f4f6"></div>
<div class="a" style="left:684px;top:58px;width:4px;height:4px;border-radius:50%;background:#f2f4f6"></div>
<div class="a" style="left:691.5px;top:40.5px;width:7px;height:7px;border-radius:50%;background:#f0434a"></div>

<div class="a" style="left:719px;top:30px;width:227px;height:540px;background:#1e2934">
  <div class="a" style="left:20px;top:15px;font-size:14px;line-height:22px;color:#cfd3d8">聊天互动</div>
  <div class="a msgs">
    <div class="m"><span class="n">杨洪霞：</span>欢迎大家来观看直播 “钉钉直播 2022-04-15”。</div>
    <div class="m"><span class="n">杨洪霞：</span>各位学员，不好意思，刚才直播不知怎么断了</div>
    <div class="m"><span class="n">杨洪霞：</span>偷一罚十和假一赔十是否有效</div>
    <div class="m"><span class="n">杨洪霞：</span>定金和订金有无区别</div>
    <div class="m"><span class="n">杨洪霞：</span>常见的担保方式：保证、抵押、质押、留置和定金</div>
    <div class="m"><span class="n">杨洪霞：</span>仲裁是一裁最局制度</div>
    <div class="m"><span class="n">杨洪霞：</span>各位学员，这时签到输入88</div>
    <div class="m">杨洪霞的直播：钉钉直播 2022-04-15 已结束。回放已保存在“群设置-直播回放”中</div>
  </div>
  <div class="a" style="left:196px;top:444px;width:30px;height:30px;border-radius:50%;overflow:hidden;background:#fff">
    <div class="a" style="left:0;top:19px;width:30px;height:11px;background:#46494f;border-radius:4px 4px 0 0"></div>
    <div class="a" style="left:0;top:19px;width:30px;height:11px;font-size:6.5px;line-height:10px;color:#f0f2f4;text-align:center;font-weight:bold">18</div>
    <svg class="a" style="left:8.5px;top:7px" width="13" height="13" viewBox="0 0 15 15"><path d="M1 7h3v8H1z" fill="#f5822a"/><path d="M5 7l3-6c1.5 0 2 1 1.7 2.5L9.2 6H13c1 0 1.6.8 1.4 1.8L13 15H5z" fill="#f5822a"/></svg>
  </div>
  <div class="a" style="left:0;top:484px;width:227px;height:1px;background:#2e3843"></div>
  <div class="a" style="left:12px;top:495px;font-size:12px;line-height:20px;color:#767d85">快来和大家一起互动吧</div>
  <div class="a" style="left:172px;top:504px;width:48px;height:28px;border-radius:14px;background:#323c47;color:#c4c9ce;font-size:14px;line-height:28px;text-align:center">发送</div>
</div>
<div class="a" style="left:0;top:514px;width:719px;height:56px;background:#1e2934">
  <div class="a" style="left:19px;top:18px;font-size:12px;line-height:18px;color:#c8ccd0;font-weight:500">主播:</div>
  <div class="a" style="left:58px;top:11px;width:28px;height:28px;border-radius:50%;background:#3e9bf4;color:#fff;font-size:8px;line-height:28px;text-align:center">洪霞</div>
  <div class="a" style="left:92.5px;top:18px;font-size:12px;line-height:18px;color:#c8ccd0;font-weight:500">杨洪霞</div>
  <div class="a" style="left:19px;top:43px;font-size:12px;line-height:18px;color:#c8ccd0;font-weight:500;letter-spacing:0.15px">标题: 钉钉直播 2022-04-15</div>
</div>

<div class="a" style="left:719px;top:30px;width:1px;height:540px;background:#27323d"></div>

</body></html>
